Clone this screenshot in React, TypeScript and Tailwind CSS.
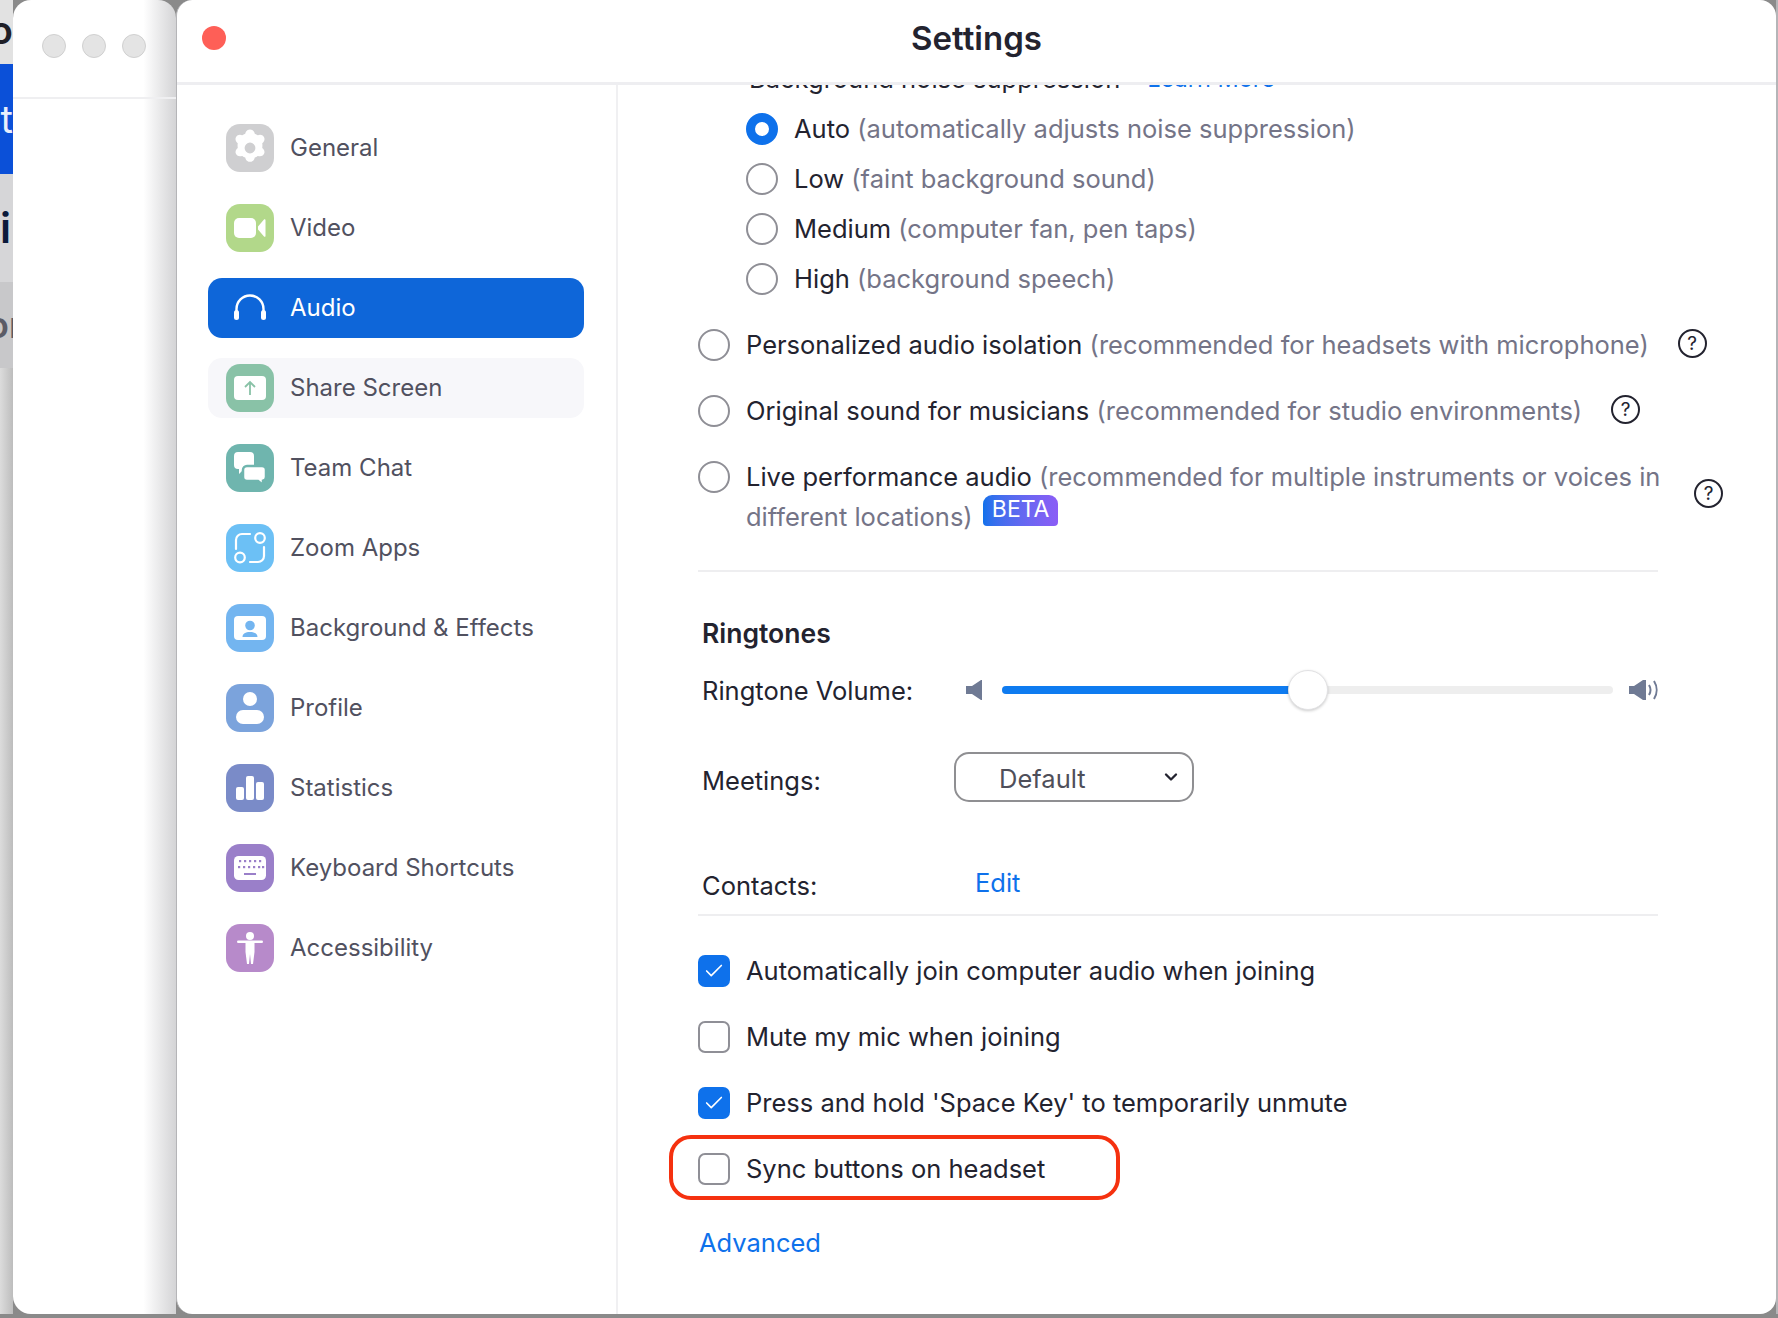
import React from 'react';
import { Check, ChevronDown } from 'lucide-react';

const IconGeneral = () => (
  <svg viewBox="0 0 48 48" className="w-12 h-12">
    <rect width="48" height="48" rx="14" fill="#cfcfd1" />
    <path
      fill="#fff"
      fillRule="evenodd"
      transform="translate(24 24) scale(1.2) translate(-24 -24)"
      d="M24 8.500c1.600 0 3.100.9 3.600 2.400l.4 1.200c.9.300 1.700.7 2.400 1.300l1.300-.3c1.500-.3 3.100.4 3.900 1.800.8 1.400.6 3.100-.5 4.300l-.9.9c.2.500.2 2.700 0 3.800l.9.9c1.100 1.200 1.300 2.900.5 4.300-.8 1.400-2.400 2.100-3.900 1.800l-1.300-.3c-.7.6-1.500 1-2.400 1.300l-.4 1.200c-.5 1.500-2 2.400-3.600 2.400s-3.100-.9-3.600-2.400l-.4-1.200c-.9-.3-1.700-.7-2.400-1.300l-1.300.3c-1.500.3-3.100-.4-3.900-1.800-.8-1.400-.6-3.100.5-4.300l.9-.9c-.2-1.100-.2-3.300 0-3.800l-.9-.9c-1.100-1.200-1.300-2.900-.5-4.300.8-1.400 2.400-2.100 3.900-1.800l1.300.3c.7-.6 1.500-1 2.400-1.300l.4-1.200c.5-1.500 2-2.400 3.600-2.400zM24 19.500a4.500 4.500 0 1 0 0 9 4.500 4.500 0 0 0 0-9z"
    />
  </svg>
);

const IconVideo = () => (
  <svg viewBox="0 0 48 48" className="w-12 h-12">
    <rect width="48" height="48" rx="14" fill="#b2d88a" />
    <rect x="8" y="14" width="22" height="20" rx="5" fill="#fff" />
    <path d="M32 22.500 38 15.500c.6-.7 1.500-.3 1.500.6v15.800c0 .9-.9 1.300-1.500.6L32 25.500z" fill="#fff" />
  </svg>
);

const IconShare = () => (
  <svg viewBox="0 0 48 48" className="w-12 h-12">
    <rect width="48" height="48" rx="14" fill="#89c2a7" />
    <rect x="8" y="12" width="32" height="24" rx="4" fill="#fff" />
    <path d="M24 31V18M19 23l5-5 5 5" fill="none" stroke="#89c2a7" strokeWidth="1.800" />
  </svg>
);

const IconChat = () => (
  <svg viewBox="0 0 48 48" className="w-12 h-12">
    <rect width="48" height="48" rx="14" fill="#6fb5ae" />
    <path d="M12 8h12a4 4 0 0 1 4 4v9a4 4 0 0 1-4 4h-6l-5 5v-5h-1a4 4 0 0 1-4-4v-9a4 4 0 0 1 4-4z" fill="#fff" />
    <path
      d="M21 22h15a4 4 0 0 1 4 4v7a4 4 0 0 1-3 3.800V41l-5-4h-11a4 4 0 0 1-4-4v-7a4 4 0 0 1 4-4z"
      fill="#fff"
      stroke="#6fb5ae"
      strokeWidth="2.500"
    />
  </svg>
);

const IconApps = () => (
  <svg viewBox="0 0 48 48" className="w-12 h-12" fill="none" stroke="#fff" strokeWidth="2.200">
    <rect width="48" height="48" rx="14" fill="#6cc0f5" stroke="none" />
    <circle cx="34" cy="14" r="4.800" />
    <circle cx="14" cy="33.500" r="4.800" />
    <path d="M10 25v-9a6 6 0 0 1 6-6h8M38 23v9a6 6 0 0 1-6 6h-8" strokeLinecap="round" />
  </svg>
);

const IconBackground = () => (
  <svg viewBox="0 0 48 48" className="w-12 h-12">
    <rect width="48" height="48" rx="14" fill="#73b5f0" />
    <rect x="8" y="12" width="32" height="24" rx="4" fill="#fff" />
    <circle cx="24" cy="21.500" r="4.800" fill="#73b5f0" />
    <path d="M16.500 33c0-3.500 3-5 7.500-5s7.500 1.500 7.500 5z" fill="#73b5f0" />
  </svg>
);

const IconProfile = () => (
  <svg viewBox="0 0 48 48" className="w-12 h-12">
    <rect width="48" height="48" rx="14" fill="#7ba3dc" />
    <circle cx="24" cy="15" r="7" fill="#fff" />
    <rect x="10" y="26" width="28" height="14" rx="7" fill="#fff" />
  </svg>
);

const IconStats = () => (
  <svg viewBox="0 0 48 48" className="w-12 h-12">
    <rect width="48" height="48" rx="14" fill="#7a8bc8" />
    <rect x="10" y="23" width="8" height="13" rx="2" fill="#fff" />
    <rect x="20" y="12" width="8" height="24" rx="2" fill="#fff" />
    <rect x="30" y="18" width="8" height="18" rx="2" fill="#fff" />
  </svg>
);

const IconKeyboard = () => (
  <svg viewBox="0 0 48 48" className="w-12 h-12">
    <rect width="48" height="48" rx="14" fill="#9a7fc9" />
    <rect x="8" y="12" width="32" height="24" rx="4.500" fill="#fff" />
    <g fill="#9a7fc9">
      {[14, 19, 24, 29, 34].map((x) => (
        <rect key={`a${x}`} x={x - 1} y="16" width="2.200" height="2.200" />
      ))}
      {[13, 18, 23, 28, 33, 37].map((x) => (
        <rect key={`b${x}`} x={x - 1} y="22" width="2.200" height="2.200" />
      ))}
      <rect x="18" y="29" width="12" height="2" />
    </g>
  </svg>
);

const IconAccess = () => (
  <svg viewBox="0 0 48 48" className="w-12 h-12">
    <rect width="48" height="48" rx="14" fill="#b78aca" />
    <circle cx="24" cy="12" r="4" fill="#fff" />
    <rect x="11" y="16.500" width="26" height="2.600" rx="1.300" fill="#fff" />
    <path d="M19.500 18h9v10l-1.500 12h-2l-1-10-1 10h-2L19.500 28z" fill="#fff" />
  </svg>
);

const IconHeadphones = () => (
  <svg viewBox="0 0 48 48" className="w-12 h-12" fill="#fff">
    <path d="M10.500 30v-5a13.500 13.500 0 0 1 27 0v5" fill="none" stroke="#fff" strokeWidth="2.400" />
    <rect x="8" y="26" width="5" height="10" rx="2.500" />
    <rect x="35" y="26" width="5" height="10" rx="2.500" />
  </svg>
);

const NAV_ITEMS = [
  { label: 'General', icon: <IconGeneral /> },
  { label: 'Video', icon: <IconVideo /> },
  { label: 'Audio', icon: <IconHeadphones />, active: true },
  { label: 'Share Screen', icon: <IconShare />, hover: true },
  { label: 'Team Chat', icon: <IconChat /> },
  { label: 'Zoom Apps', icon: <IconApps /> },
  { label: 'Background & Effects', icon: <IconBackground /> },
  { label: 'Profile', icon: <IconProfile /> },
  { label: 'Statistics', icon: <IconStats /> },
  { label: 'Keyboard Shortcuts', icon: <IconKeyboard /> },
  { label: 'Accessibility', icon: <IconAccess /> },
];

const NavItem = ({ label, icon, active, hover }: { label: string; icon: React.ReactNode; active?: boolean; hover?: boolean }) => (
  <div
    className={`flex items-center h-[60px] pl-[18px] gap-4 rounded-[14px] ${
      active ? 'bg-[#0e66d9] text-white' : hover ? 'bg-[#f7f7fa] text-[#51515f]' : 'text-[#51515f]'
    }`}
  >
    {icon}
    <span className="text-[24px] leading-none">{label}</span>
  </div>
);

const Radio = ({ checked }: { checked?: boolean }) => (
  <span
    className={`block shrink-0 w-8 h-8 rounded-full bg-white ${
      checked ? 'border-[9px] border-[#0e71eb]' : 'border-2 border-[#8f8f96]'
    }`}
  />
);

const Help = () => (
  <span className="flex shrink-0 items-center justify-center w-[29px] h-[29px] rounded-full border-2 border-[#23232f] text-[19px] leading-none text-[#23232f]">
    ?
  </span>
);

const Option = ({ name, hint }: { name: string; hint: string }) => (
  <div className="flex items-center h-[50px] gap-4 pl-[48px]">
    <Radio checked={name === 'Auto'} />
    <span>
      <span className="text-[#23232f]">{name}</span> <span className="text-[#747487]">{hint}</span>
    </span>
  </div>
);

const Checkbox = ({ label, checked }: { label: string; checked?: boolean }) => (
  <div className="flex items-center h-[66px] gap-4">
    <span
      className={`flex shrink-0 items-center justify-center w-8 h-8 rounded-[7px] ${
        checked ? 'bg-[#0e71eb]' : 'bg-white border-2 border-[#8f8f96]'
      }`}
    >
      {checked && <Check size={22} strokeWidth={1.800} className="text-white" />}
    </span>
    <span className="text-[#23232f]">{label}</span>
  </div>
);

const SpeakerSmall = () => (
  <svg viewBox="0 0 16 20" className="w-4 h-5 shrink-0">
    <path d="M0 6h6l9-6h1v20h-1l-9-6H0z" fill="#6f7a94" />
  </svg>
);

const SpeakerLoud = () => (
  <svg viewBox="0 0 30 20" className="w-[30px] h-5 shrink-0">
    <path d="M0 6h5l9-6h3v20h-3l-9-6H0z" fill="#6f7a94" />
    <path d="M20 5c2 3.300 2 6.700 0 10" fill="none" stroke="#6f7a94" strokeWidth="2" />
    <path d="M25 1c3.500 5.500 3.500 12.500 0 18" fill="none" stroke="#6f7a94" strokeWidth="2" />
  </svg>
);

// the app window peeking out on the far left
const BackStrip = () => (
  <div className="flex flex-col w-[13px] h-full shrink-0 overflow-hidden font-semibold text-[38px] leading-none whitespace-nowrap">
    <div className="flex items-center justify-end h-[64px] pb-[4px] bg-[#e2e2e2] text-[#1f1f27]">o</div>
    <div className="flex items-center justify-end h-[110px] bg-[#0b50d8] text-[#e8eefc] font-normal">nt</div>
    <div className="flex items-center justify-start h-[108px] bg-[#d6d6d8] text-[#0b1a3a] text-[42px]">ir</div>
    <div className="flex items-center justify-start h-[86px] bg-[#c8c8ca] text-[#5b5b66] text-[36px]">
      <span className="-ml-[13px]">or</span>
    </div>
    <div className="flex-1 bg-gradient-to-r from-[#dcdcdc] to-[#bdbdbd]" />
  </div>
);

const BackWindow = () => (
  <div className="w-[163px] h-full shrink-0 rounded-t-[18px] rounded-bl-[18px] bg-gradient-to-r from-white from-[80%] to-[#d4d4d6]">
    <div className="flex items-center gap-4 h-[99px] pl-[29px] pb-[6px] border-b-2 border-[#efeff1]">
      <span className="w-6 h-6 rounded-full bg-[#e4e4e4] border border-[#d0d0d0]" />
      <span className="w-6 h-6 rounded-full bg-[#e4e4e4] border border-[#d0d0d0]" />
      <span className="w-6 h-6 rounded-full bg-[#e4e4e4] border border-[#d0d0d0]" />
    </div>
  </div>
);

export default function App() {
  return (
    <div className="w-[1778px] h-[1318px] overflow-hidden bg-[#8a8a8a] font-['Inter',sans-serif] text-[25.5px]">
      <div className="flex h-[1314px]">
        <BackStrip />
        <BackWindow />

        {/* Settings window */}
        <div className="flex flex-col w-[1600px] h-full shrink-0 rounded-[16px] bg-white border-l border-[#b5b5b8]">
          <div className="relative flex items-center justify-center h-[85px] shrink-0 pb-[4px] border-b-[3px] border-[#eeeef1]">
            <span className="absolute left-[25px] top-[26px] w-6 h-6 rounded-full bg-[#fe5f57]" />
            <span className="text-[33px] font-semibold text-[#23232f]">Settings</span>
          </div>

          <div className="flex flex-1 min-h-0">
            {/* Sidebar */}
            <div className="flex flex-col w-[441px] shrink-0 gap-5 pt-[33px] pl-[31px] pr-[32px] border-r-2 border-[#f0f0f2]">
              {NAV_ITEMS.map((item) => (
                <NavItem key={item.label} {...item} />
              ))}
            </div>

            {/* Audio pane */}
            <div className="relative flex-1 min-w-0 overflow-hidden pl-[80px]">
              <div className="flex items-center h-[30px] -mt-[21px] mb-[10px] pl-[51px] text-[#23232f]">
                Background noise suppression
                <span className="ml-[27px] text-[23.5px] text-[#0e71eb]">Learn More</span>
              </div>

              <Option name="Auto" hint="(automatically adjusts noise suppression)" />
              <Option name="Low" hint="(faint background sound)" />
              <Option name="Medium" hint="(computer fan, pen taps)" />
              <Option name="High" hint="(background speech)" />

              <div className="flex items-center h-[66px] gap-4 mt-[8px]">
                <Radio />
                <span>
                  <span className="text-[#23232f]">Personalized audio isolation</span>{' '}
                  <span className="text-[#747487]">(recommended for headsets with microphone)</span>
                </span>
                <span className="ml-[13px] -mt-[4px]">
                  <Help />
                </span>
              </div>
              <div className="flex items-center h-[66px] gap-4">
                <Radio />
                <span>
                  <span className="text-[#23232f]">Original sound for musicians</span>{' '}
                  <span className="text-[#747487]">(recommended for studio environments)</span>
                </span>
                <span className="ml-[13px] -mt-[4px]">
                  <Help />
                </span>
              </div>
              <div className="flex items-start gap-4 pt-[17px] h-[128px] border-b-2 border-[#eeeef0] w-[960px]">
                <Radio />
                <span className="w-[925px] shrink-0 leading-[36px] -mt-[2px]">
                  <span className="text-[#23232f]">Live performance audio</span>{' '}
                  <span className="text-[#747487]">
                    (recommended for multiple instruments or voices in different locations)
                  </span>{' '}
                  <span className="inline-block align-[9px] ml-[3px] h-[31px] px-[9px] rounded-t-[9px] rounded-b-[4px] bg-gradient-to-r from-[#0e71eb] to-[#8b5cf6] text-[23px] leading-[28px] text-white">
                    BETA
                  </span>
                </span>
                <span className="shrink-0 mt-[18px] ml-[7px]">
                  <Help />
                </span>
              </div>

              <div className="pl-[4px] pt-[46px] text-[#23232f]">
                <div className="font-semibold text-[26.5px] leading-[30px]">Ringtones</div>

                <div className="flex items-center h-[40px] mt-[22px]">
                  <span className="w-[264px] shrink-0 pt-[2px]">Ringtone Volume:</span>
                  <SpeakerSmall />
                  <div className="relative w-[611px] h-2 ml-[20px] rounded-full bg-[#eeeeee]">
                    <div className="w-[306px] h-full rounded-full bg-[#0e7bf0]" />
                    <span className="absolute left-[286px] -top-[16px] w-10 h-10 rounded-full bg-white border border-[#e2e2e4] shadow-[0_1px_3px_rgba(0,0,0,0.2)]" />
                  </div>
                  <span className="ml-[16px]">
                    <SpeakerLoud />
                  </span>
                </div>

                <div className="flex items-center h-[50px] mt-[42px]">
                  <span className="w-[252px] shrink-0 pt-[9px]">Meetings:</span>
                  <div className="flex items-center justify-between w-[240px] h-[50px] pl-[43px] pr-[11px] pt-[4px] rounded-[15px] border-2 border-[#8f8f92] text-[#4f4f5a]">
                    Default
                    <ChevronDown size={20} strokeWidth={2.800} className="text-[#23232f] -mt-[4px]" />
                  </div>
                </div>

                <div className="flex items-center h-[40px] mt-[61px] w-[960px]">
                  <span className="w-[273px] shrink-0 pt-[6px]">Contacts:</span>
                  <span className="text-[#0e71eb]">Edit</span>
                </div>
              </div>

              <div className="w-[960px] mt-[11px] border-b-2 border-[#eeeef0]" />

              <div className="pt-[22px]">
                <Checkbox label="Automatically join computer audio when joining" checked />
                <Checkbox label="Mute my mic when joining" />
                <Checkbox label="Press and hold 'Space Key' to temporarily unmute" checked />
                <Checkbox label="Sync buttons on headset" />
              </div>

              <div className="mt-[23px] pl-[1px] leading-[36px] text-[#0e71eb]">Advanced</div>

              {/* annotation drawn over the screenshot */}
              <div className="absolute left-[51px] top-[1050px] w-[451px] h-[65px] rounded-[22px] border-[4px] border-[#f5310f]" />
            </div>
          </div>
        </div>
        <div className="w-[2px] h-full bg-[#b5b5b8]" />
      </div>
    </div>
  );
}
